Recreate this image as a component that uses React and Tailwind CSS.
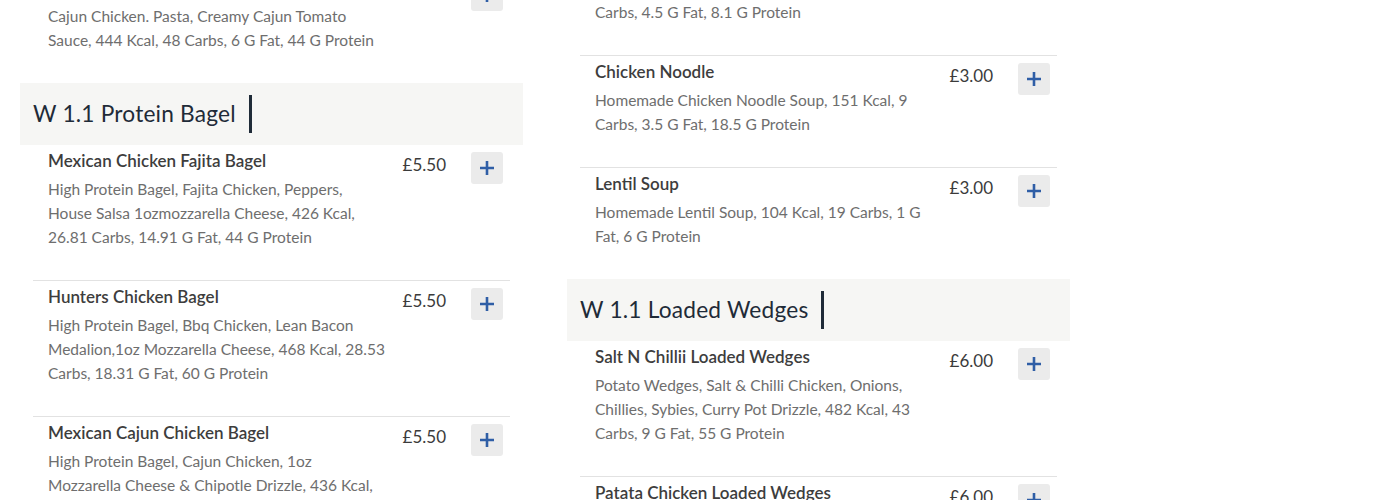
const PlusIcon = () => (
  <svg width="16" height="16" viewBox="0 0 16 16" fill="none">
    <path d="M8 1v14M1 8h14" stroke="#2f5ea6" strokeWidth="2.6" />
  </svg>
)

const leftItems = [
  {
    type: 'item',
    name: 'Cajun Chicken Pasta',
    price: '£6.00',
    desc: 'Cajun Chicken. Pasta, Creamy Cajun Tomato\nSauce, 444 Kcal, 48 Carbs, 6 G Fat, 44 G Protein',
    first: true,
  },
  { type: 'header', title: 'W 1.1 Protein Bagel' },
  {
    type: 'item',
    name: 'Mexican Chicken Fajita Bagel',
    price: '£5.50',
    desc: 'High Protein Bagel, Fajita Chicken, Peppers,\nHouse Salsa 1ozmozzarella Cheese, 426 Kcal,\n26.81 Carbs, 14.91 G Fat, 44 G Protein',
    first: true,
  },
  {
    type: 'item',
    name: 'Hunters Chicken Bagel',
    price: '£5.50',
    desc: 'High Protein Bagel, Bbq Chicken, Lean Bacon\nMedalion,1oz Mozzarella Cheese, 468 Kcal, 28.53\nCarbs, 18.31 G Fat, 60 G Protein',
  },
  {
    type: 'item',
    name: 'Mexican Cajun Chicken Bagel',
    price: '£5.50',
    desc: 'High Protein Bagel, Cajun Chicken, 1oz\nMozzarella Cheese & Chipotle Drizzle, 436 Kcal,\n27.5 Carbs, 12.4 G Fat, 47 G Protein',
  },
]

const rightItems = [
  {
    type: 'item',
    name: 'Tomato Soup',
    price: '£3.00',
    desc: 'Homemade Tomato Soup, 98 Kcal, 12\nCarbs, 4.5 G Fat, 8.1 G Protein',
  },
  {
    type: 'item',
    name: 'Chicken Noodle',
    price: '£3.00',
    desc: 'Homemade Chicken Noodle Soup, 151 Kcal, 9\nCarbs, 3.5 G Fat, 18.5 G Protein',
  },
  {
    type: 'item',
    name: 'Lentil Soup',
    price: '£3.00',
    desc: 'Homemade Lentil Soup, 104 Kcal, 19 Carbs, 1 G\nFat, 6 G Protein',
  },
  { type: 'header', title: 'W 1.1 Loaded Wedges' },
  {
    type: 'item',
    name: 'Salt N Chillii Loaded Wedges',
    price: '£6.00',
    desc: 'Potato Wedges, Salt & Chilli Chicken, Onions,\nChillies, Sybies, Curry Pot Drizzle, 482 Kcal, 43\nCarbs, 9 G Fat, 55 G Protein',
    first: true,
  },
  {
    type: 'item',
    name: 'Patata Chicken Loaded Wedges',
    price: '£6.00',
    desc: 'Potato Wedges, Chicken, Cheese Sauce,\nOnions, Peppers, 510 Kcal, 45 Carbs',
  },
]

function SectionHeader({ title }) {
  return (
    <div className="h-[62px] bg-[#f6f6f4] pl-[13px] flex items-center gap-[13px]">
      <h2 className="text-[22.7px] leading-none text-[#1f2b38] tracking-[0.2px]">{title}</h2>
      <span className="w-[3px] h-[38px] bg-[#1f2b38]" />
    </div>
  )
}

function MenuItem({ item }) {
  return (
    <div className={`mx-[13px] flex pl-[15px] pr-[7px] pt-[4px] pb-[31px] ${item.first ? '' : 'border-t border-[#e2e2e2]'}`}>
      <div className="flex-1">
        <h3 className="text-[17px] leading-6 font-semibold text-[#3d3d3d]">{item.name}</h3>
        <p className="mt-1 text-[15.5px] leading-6 text-[#6e6e6e]">
          {item.desc.split('\n').map((line, i) => (
            <span key={i} className="block whitespace-nowrap">{line}</span>
          ))}
        </p>
      </div>
      <span className="mt-[4px] text-[17px] leading-6 text-[#3b3b3b]">{item.price}</span>
      <button className="ml-[25px] mt-[3px] w-[32px] h-[32px] rounded-[3px] bg-[#ebebeb] flex items-center justify-center">
        <PlusIcon />
      </button>
    </div>
  )
}

function Column({ items, offset }) {
  return (
    <div className={`w-[503px] ${offset}`}>
      {items.map((it, i) =>
        it.type === 'header' ? <SectionHeader key={i} title={it.title} /> : <MenuItem key={i} item={it} />
      )}
    </div>
  )
}

export default function App() {
  return (
    <div className="h-[500px] overflow-hidden bg-white font-['Lato',sans-serif]">
      <div className="flex gap-[44px] px-5">
        <Column items={leftItems} offset="-mt-[28px]" />
        <Column items={rightItems} offset="-mt-[57px]" />
      </div>
    </div>
  )
}
